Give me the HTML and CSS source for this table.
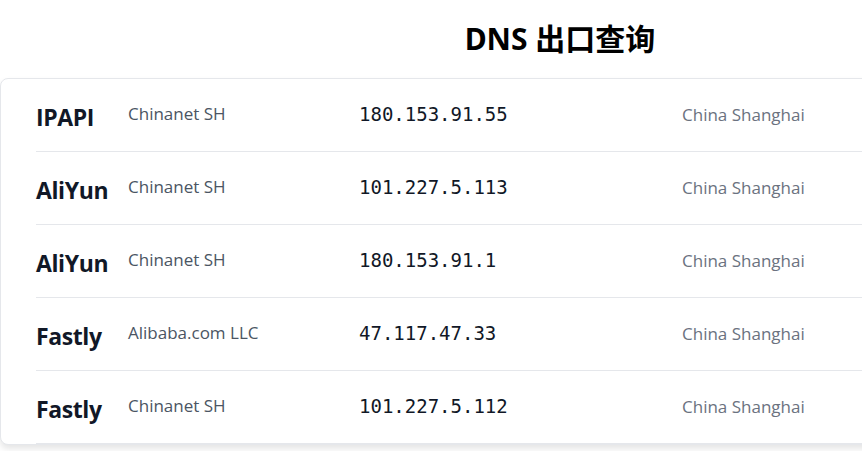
FILE: index.html
```html
<!DOCTYPE html>
<html lang="zh-CN">
<head>
<meta charset="utf-8">
<title>DNS 出口查询</title>
<link rel="stylesheet" href="styles.css">
</head>
<body>
<div class="page">
  <h1 class="title">DNS 出口查询</h1>
  <div class="card">
    <div class="row">
      <div class="name">IPAPI</div>
      <div class="isp">Chinanet SH</div>
      <div class="ip">180.153.91.55</div>
      <div class="loc">China Shanghai</div>
    </div>
    <div class="row">
      <div class="name">AliYun</div>
      <div class="isp">Chinanet SH</div>
      <div class="ip">101.227.5.113</div>
      <div class="loc">China Shanghai</div>
    </div>
    <div class="row">
      <div class="name">AliYun</div>
      <div class="isp">Chinanet SH</div>
      <div class="ip">180.153.91.1</div>
      <div class="loc">China Shanghai</div>
    </div>
    <div class="row">
      <div class="name">Fastly</div>
      <div class="isp">Alibaba.com LLC</div>
      <div class="ip">47.117.47.33</div>
      <div class="loc">China Shanghai</div>
    </div>
    <div class="row">
      <div class="name">Fastly</div>
      <div class="isp">Chinanet SH</div>
      <div class="ip">101.227.5.112</div>
      <div class="loc">China Shanghai</div>
    </div>
  </div>
</div>
</body>
</html>
```

FILE: styles.css
```css
html, body {
  margin: 0;
  padding: 0;
  background: #ffffff;
  overflow: hidden;
}
body {
  font-family: "Open Sans", "Noto Sans", "Noto Sans CJK SC", sans-serif;
  color: #111827;
}
.page {
  width: 1120px;
}
.title {
  margin: 0;
  height: 78px;
  box-sizing: border-box;
  padding-top: 19px;
  text-align: center;
  font-size: 30px;
  line-height: 40px;
  font-weight: 700;
  color: #000000;
  font-family: "Noto Sans", "Noto Sans CJK SC", sans-serif;
}
.card {
  border: 1px solid #e5e7eb;
  border-radius: 8px;
  box-shadow: 0 4px 6px rgba(0, 0, 0, 0.1);
  background: #ffffff;
  margin-bottom: 10px;
}
.row {
  display: grid;
  grid-template-columns: 92px 231px 323px 1fr;
  align-items: center;
  margin-left: 35px;
  height: 72px;
  border-bottom: 1px solid #e5e7eb;
}
.name {
  font-size: 23px;
  font-weight: 700;
  color: #111827;
  padding-top: 4px;
  letter-spacing: -0.4px;
}
.isp {
  font-size: 17px;
  color: #4b5563;
  padding-bottom: 3px;
}
.ip {
  font-family: "DejaVu Sans Mono", "Liberation Mono", monospace;
  font-size: 19px;
  color: #111827;
  padding-bottom: 3px;
}
.loc {
  font-size: 17px;
  color: #6b7280;
  padding-bottom: 1px;
}
```
